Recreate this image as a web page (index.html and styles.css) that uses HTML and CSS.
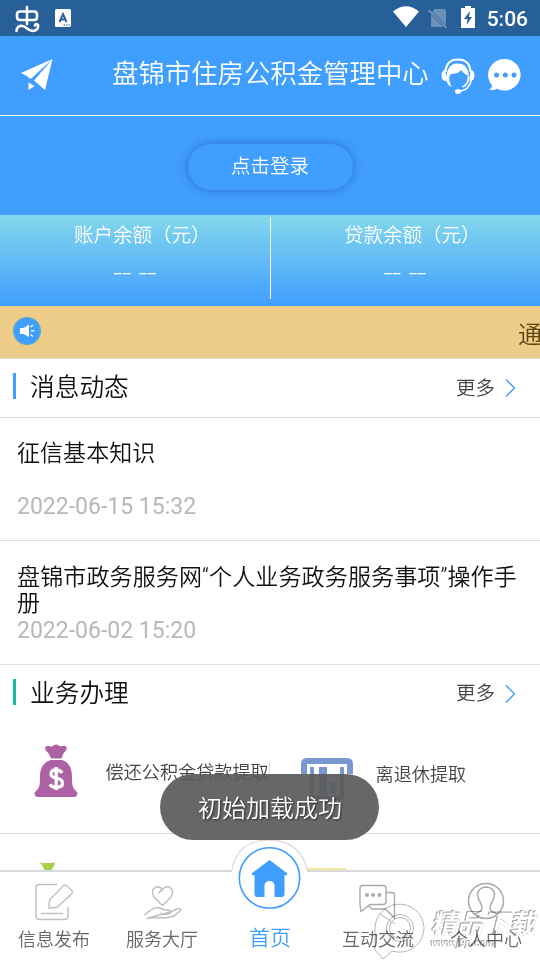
FILE: index.html
```html
<!DOCTYPE html>
<html lang="zh-CN">
<head>
<meta charset="utf-8">
<title>盘锦市住房公积金管理中心</title>
<link rel="stylesheet" href="styles.css">
</head>
<body>
<div class="app">
  <div class="status">
    <svg class="status-worm" width="26" height="28" viewBox="0 0 26 28" fill="none" stroke="#fff" stroke-width="2.6" stroke-linecap="round"><path d="M13 2v17M6 6.500h14q3 0 3 3v2.500q0 3-3 3H6q-3 0-3-3V9.500q0-3 3-3z"/><path d="M2.500 26c0-4 3-5.500 6-5 4 .500 5 5 10 5 4 0 6.500-3 5.500-6-1-1.500-3-1-3 .5"/></svg>
    <svg class="status-a" width="16" height="18" viewBox="0 0 16 18"><rect width="16" height="18" rx="1.500" fill="#fff"/><path d="M4.500 13 8 5l3.500 8M6 10.500h4" fill="none" stroke="#275f99" stroke-width="1.900"/><path d="M8.500 16h1.500M11 16h1.500M13.500 16H15" stroke="#275f99"/></svg>
    <span class="grow"></span>
    <svg class="wifi" width="26" height="21" viewBox="0 0 26 21"><path d="M0 5.500Q13-5 26 5.500L13 21z" fill="#fff"/></svg>
    <svg class="sim" width="20" height="21" viewBox="0 0 20 21"><path d="M7 1h9q2 0 2 2v16H3V5z" fill="#6b91b8"/><path d="m.500 2 18 18" stroke="#275f99" stroke-width="3"/><path d="m.500 2 18 18" stroke="#7c9ec1" stroke-width="1.600"/></svg>
    <svg class="battery" width="14" height="22" viewBox="0 0 14 22"><path d="M4 0h6v2h4v20H0V2h4z" fill="#fff"/><path d="m9 5-6 8h3.500L5.500 19l5.500-8H8z" fill="#275f99"/></svg>
    <span class="clock">5:06</span>
  </div>
  <header class="header">
    <svg class="plane" width="34" height="34" viewBox="0 0 34 34" fill="#fff"><path d="M32.500 1 1 15l8.500 4.500z"/><path d="M32.500 1 25 32l-11-9.500z"/><path d="M32.500 1 8 19.500l3 1.200z"/><path d="m8.500 24.500 6 3.500-6 4z"/></svg>
    <h1>盘锦市住房公积金管理中心</h1>
    <svg class="service" width="34" height="37" viewBox="0 0 34 37"><path d="M4.500 14C5 5 10 1.500 17 1.500S29 5 29.500 14" fill="none" stroke="#fff" stroke-width="2.200"/><path d="M4.500 12q-4 0-4 5.500t5 5.500zM29.500 12q4 0 4 5.500t-5 5.500z" fill="#fff"/><path d="M6 15C8 7 12 5.500 17 5.500S27 8 28 18c-3-1-6-3-8-6-2 3-6 4-10 4-3 3-2 8 1 13-6-2-7-9-5-14z" fill="#fff"/><path d="M27.500 18c.500 6-3 10-6 11" fill="none" stroke="#fff" stroke-width="1.800"/><path d="M30.500 22c-2 7-6 11-12 11" fill="none" stroke="#fff" stroke-width="1.500"/><ellipse cx="17" cy="33.500" rx="3" ry="2.500" fill="#fff"/></svg>
    <svg class="chat" width="34" height="34" viewBox="0 0 34 34"><path d="M17 1a16 15.800 0 1 1-8 29.700Q5 33 1 31.500q3-1 3-4A16 16 0 0 1 17 1z" fill="#fff"/><g fill="#409eff"><circle cx="8.500" cy="17" r="2.500"/><circle cx="17.300" cy="17" r="2.500"/><circle cx="26" cy="17" r="2.500"/></g></svg>
  </header>
  <section class="login"><button>点击登录</button></section>
  <section class="balances">
    <div class="balance"><p>账户余额（元）</p><span>__ __</span></div>
    <div class="balance"><p>贷款余额（元）</p><span>__ __</span></div>
  </section>
  <section class="notice">
    <svg width="28" height="28" viewBox="0 0 28 28"><circle cx="14" cy="14" r="13.300" fill="#409eff" stroke="#55a9d3" stroke-width="1.400"/><path d="M7 11h3.500L16 7.500v12.500L10.500 17H7z" fill="#fff"/><path d="m17.500 10 2.500-2M18 13.800h3.500M17.500 17.500l2.500 2" stroke="#fff" stroke-width="1.300"/></svg>
    <span>通</span>
  </section>
  <div class="title-row news-title"><h2>消息动态</h2><a>更多</a><svg width="12" height="20" viewBox="0 0 12 20"><path d="m1 1.500 8.500 8.500L1 18.500" fill="none" stroke="#409eff" stroke-width="1.400"/></svg></div>
  <article class="news"><h3>征信基本知识</h3><time>2022-06-15 15:32</time></article>
  <article class="news"><h3>盘锦市政务服务网“个人业务政务服务事项”操作手册</h3><time>2022-06-02 15:20</time></article>
  <div class="title-row biz-title"><h2>业务办理</h2><a>更多</a><svg width="12" height="20" viewBox="0 0 12 20"><path d="m1 1.500 8.500 8.500L1 18.500" fill="none" stroke="#409eff" stroke-width="1.400"/></svg></div>
  <section class="services">
    <div class="item item-loan">
      <svg width="44" height="54" viewBox="0 0 44 54"><path d="M17 14.500Q15 9 11.500 6 10 1.500 15 2q3 1 4.500-.5 3-2 5 0 2 1.500 5 .3 4-.5 3 4Q29 9 27.500 14.500z" fill="#ae62a6"/><path d="M17 16h11c7 2 10 9 10 16 0 7 0 12 4 15 3 3 1 6-3 6H5c-4 0-6-3-3-6 4-3 4-8 4-15 0-7 3-14 11-16z" fill="#ae62a6"/><path d="M28 29q-1.500-3-6-3-5 0-5 4 0 3 5.500 4.200 6 1 6 5 0 4-6 4-5 0-6.500-3M22.200 23v23" fill="none" stroke="#fff" stroke-width="3.300"/></svg>
      <span>偿还公积金贷款提取</span>
      <i></i>
    </div>
    <div class="item item-retire">
      <svg width="52" height="44" viewBox="0 0 52 44" fill="none" stroke="#7799d0"><path d="M3 16V6q0-3 3-3h40q3 0 3 3v10" stroke-width="6"/><path d="M11 9v28q0 3 3 3h24q3 0 3-3V9" stroke-width="4"/><path d="M22 9v28" stroke-width="8"/><circle cx="32" cy="27" r="1.500" stroke-width="3"/><circle cx="32" cy="33" r="1.500" stroke-width="3"/></svg>
      <span>离退休提取</span>
    </div>
  </section>
  <section class="next-services">
    <svg class="green-bag" width="16" height="8" viewBox="0 0 16 8"><path d="M0 .500q8 1 15.500 0-2 4-4 7.500h-7Q3 4 0 .500z" fill="#a5ce4c"/></svg>
    <i class="yellow-line"></i>
  </section>
  <nav class="tabs">
    <div class="tab"><svg width="40" height="38" viewBox="0 0 40 38" fill="none" stroke="#bfbfbf" stroke-width="1.400"><path d="M23 1.500H5Q2 1.500 2 4.500v29q0 3 3 3h26q3 0 3-3V24M7 30.500h22"/><path d="m15 25 .5-8L29.500 2.500q2-1 3.500.5l5 5q1 1.500 0 2.500L24 23.500q-1 1-3 1z"/></svg><span>信息发布</span></div>
    <div class="tab"><svg width="40" height="38" viewBox="0 0 40 38" fill="none" stroke="#bfbfbf" stroke-width="1.500"><path d="M20.500 22.500 12 14q-4-7 2-10 4-1 6.500 3-2 1-4 3M20.500 22.500 29 14q4-7-2-10-4-1-8 4"/><path d="M2.500 32q8-7 12-7.500 4 .500 7 2l6 1q3 3-1 3.500-4 .500-8-.5M28 29l7-3q4-1 4 1l-7 6-8 2-12-.5-7 1z"/></svg><span>服务大厅</span></div>
    <div class="tab home">
      <svg width="80" height="72" viewBox="0 0 80 72"><path d="M2 33C5 13 19 3 39 3s34 10 38 30v38H2z" fill="#fff"/><path d="M2 33C5 13 19 3 39 3s34 10 38 30" fill="none" stroke="#ddd" stroke-width="1.400"/><circle cx="39.500" cy="41" r="30.200" fill="#fff" stroke="#409eff" stroke-width="1.600"/><path d="m39.500 23 18 13.500-1 2-2-.5V57q0 3-3 3h-7V48q-1-4-5-4t-5 4v12h-7q-3 0-3-3V38l-2 .5-1-2z" fill="#409eff"/></svg>
      <span>首页</span>
    </div>
    <div class="tab"><svg width="40" height="38" viewBox="0 0 40 38" fill="none" stroke="#aaa" stroke-width="1.400"><path d="M5 2.500h20q3 0 3 3v13q0 3-3 3H12l-9 7-1-7v-16q0-3 3-3zM28 9.500h5.500q3 0 3 3V35l-9-9H14l-3-3"/><g fill="#aaa" stroke="none"><circle cx="9" cy="12" r="2"/><circle cx="15" cy="12" r="2"/><circle cx="21.500" cy="12" r="2"/></g></svg><span>互动交流</span></div>
    <div class="tab"><svg width="40" height="38" viewBox="0 0 40 38" fill="none" stroke="#aaa" stroke-width="1.500"><circle cx="20" cy="18" r="17.500"/><path d="M8 31q7-2 8-5 0-4-2-7-2-3-2.500-8 1-6.500 8.500-7 7.500.5 8.500 7-.5 5-2.500 8-2 3-2 7 1 3 8 5"/></svg><span>个人中心</span></div>
  </nav>
  <div class="watermark">
    <svg width="54" height="58" viewBox="0 0 54 58" fill="none" stroke="#b5b5b5" stroke-width="1"><path d="M2 48V27A24.500 24 0 1 1 19 49L10 57z"/><circle cx="27" cy="26" r="13.500"/><circle cx="27" cy="26" r="10.500"/><path d="m7 12 15 10"/></svg>
    <div class="brand"><b>精品下载</b><small>www.j9p.com</small></div>
  </div>
  <div class="toast">初始加载成功</div>
</div>
</body>
</html>
```
FILE: styles.css
```css
* { box-sizing: border-box; }
body { margin: 0; font-family: Roboto, "Noto Sans CJK SC", sans-serif; font-weight: 350; background: #fff; }
h1, h2, h3, p { margin: 0; font-weight: 350; }
svg { display: block; flex: none; overflow: visible; }
.app { position: relative; width: 540px; height: 960px; overflow: hidden; display: flex; flex-direction: column; }
.app > * { flex-shrink: 0; }
.grow { flex: 1; }

.status { height: 36px; background: #275f99; display: flex; align-items: center; padding: 0 12px 0 14px; color: #fff; }
.status-worm { margin-top: 1px; }
.status-a { margin-left: 15px; }
.wifi { margin-right: 9px; margin-top: -3px; }
.sim { margin-right: 13px; }
.battery { margin-right: 12px; margin-top: -2px; }
.clock { font-size: 21px; line-height: 36px; height: 34px; font-weight: 500; }

.header { height: 80px; background: #409eff; border-bottom: 1px solid #fff; display: flex; align-items: flex-start; padding: 22px 20px 0; color: #fff; }
.header h1 { font-size: 26.400px; line-height: 32px; margin-left: 58px; white-space: nowrap; width: 317px; }
.service { margin-left: 12px; }
.chat { margin-left: 13.5px; }

.login { height: 99px; background: #409eff; display: flex; justify-content: center; padding: 28px 0 0 1px; }
.login button { width: 165px; height: 46px; border: 0; border-radius: 23px; background: #409eff; color: #fff; font: 350 19.500px/44px Roboto, "Noto Sans CJK SC", sans-serif; padding: 0 1px 0 0; box-shadow: 0 0 10px rgba(25, 75, 150, .55); }

.balances { height: 91px; display: flex; background: linear-gradient(#84d8eb, #409eff); color: #fff; padding-top: 2px; }
.balance { width: 270px; height: 82px; padding-left: 74px; display: flex; flex-direction: column; }
.balance + .balance { border-left: 1px solid #fff; padding-left: 73px; }
.balance p { font-size: 19.500px; line-height: 37px; height: 34px; white-space: nowrap; }
.balance span { font-size: 17px; line-height: 24px; margin: 4px 0 0 40px; letter-spacing: 1.200px; word-spacing: 2px; font-weight: 400; }

.notice { height: 53px; background: #edcc87; border-bottom: 1px solid #ddd; display: flex; align-items: flex-start; justify-content: space-between; padding: 11px 0 0 13px; overflow: hidden; }
.notice span { width: 22px; font-size: 24px; line-height: 37px; color: #5d430d; white-space: nowrap; }

.title-row { display: flex; padding: 0 23px 0 13px; align-items: flex-start; }
.title-row h2 { flex: 1; height: 26px; font-size: 24.700px; line-height: 29px; padding-left: 14px; border-left: 3px solid #409eff; color: #111; }
.title-row a { font-size: 19.500px; line-height: 26px; color: #444; margin-right: 10px; margin-top: 3px; }
.title-row svg { margin-top: 5px; }
.news-title { height: 59px; padding-top: 14px; border-bottom: 1px solid #ddd; }
.biz-title { height: 55px; padding-top: 14px; }
.biz-title h2 { border-color: #1abc9c; }
.biz-title a { margin-top: 2px; }

.news { border-bottom: 1px solid #ddd; height: 123px; padding: 23px 17px 0; display: flex; flex-direction: column; }
.news + .news { height: 124px; padding-top: 24px; padding-right: 10px; }
.news h3 { font-size: 23.050px; line-height: 26px; height: 52px; color: #111; }
.news + .news h3 { letter-spacing: .09px; }
.news time { font-size: 23px; line-height: 28px; color: #b8b8b8; font-weight: 400; }

.services { height: 114px; display: flex; border-bottom: 1px solid #ddd; }
.item { width: 270px; display: flex; color: #444; font-size: 18.150px; line-height: 26px; white-space: nowrap; }
.item-loan { padding: 24px 0 0 34px; }
.item-loan span { margin: 16px 0 0 27.5px; }
.item-loan i { width: 1px; height: 50px; background: #ddd; margin-top: 17px; }
.item-retire { padding: 38px 0 0 31px; }
.item-retire span { margin: 4px 0 0 22.5px; }
.next-services { height: 36px; display: flex; justify-content: space-between; align-items: flex-end; padding: 0 194px 0 40px; }
.yellow-line { width: 39px; height: 2px; background: #f3e99c; }

.tabs { height: 90px; border-top: 2px solid #d9d9d9; background: #fff; display: flex; }
.tab { width: 108px; display: flex; flex-direction: column; align-items: center; padding-top: 11px; font-size: 18px; color: #666; }
.tab span { line-height: 26px; margin-top: 6px; }
.tab.home { padding: 0; color: #409eff; font-size: 21px; }
.home svg { margin-top: -35px; }
.tab.home span { line-height: 30px; margin-top: 14px; }

.watermark { position: absolute; left: 373px; top: 902px; display: flex; pointer-events: none; mix-blend-mode: multiply; }
.brand { margin-left: 4px; padding-top: 8px; display: flex; flex-direction: column; color: #fff; font-style: italic; white-space: nowrap; filter: drop-shadow(.5px .5px 0 #aaa) drop-shadow(-.5px -.5px 0 #aaa); }
.brand b { font-size: 26px; line-height: 28px; font-weight: 700; }
.brand small { font-size: 11px; line-height: 12px; font-weight: 700; }

.toast { position: absolute; left: 160px; top: 774px; width: 219px; height: 66px; border-radius: 33px; background: rgba(88, 88, 88, .91); color: #fff; font-size: 24px; line-height: 70px; padding-left: 1px; text-align: center; text-shadow: 1px 1px 2px rgba(0, 0, 0, .6); }
```
